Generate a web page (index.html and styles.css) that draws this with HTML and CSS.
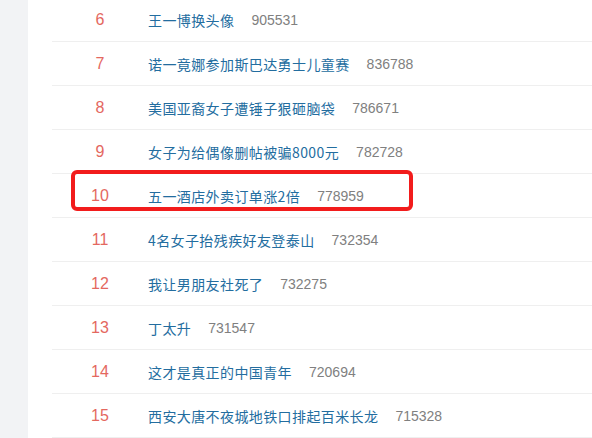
FILE: index.html
```html
<!DOCTYPE html>
<html lang="zh-CN">
<head>
<meta charset="utf-8">
<title>热搜榜</title>
<link rel="stylesheet" href="styles.css">
</head>
<body>
<div class="page">
  <aside class="side"></aside>
  <main class="main">
    <ul class="list">
      <li class="row"><span class="rank">6</span><a class="title">王一博换头像</a><span class="count">905531</span></li>
      <li class="row"><span class="rank">7</span><a class="title">诺一竟娜参加斯巴达勇士儿童赛</a><span class="count">836788</span></li>
      <li class="row"><span class="rank">8</span><a class="title">美国亚裔女子遭锤子狠砸脑袋</a><span class="count">786671</span></li>
      <li class="row"><span class="rank">9</span><a class="title">女子为给偶像删帖被骗8000元</a><span class="count">782728</span></li>
      <li class="row marked"><span class="rank">10</span><a class="title">五一酒店外卖订单涨2倍</a><span class="count">778959</span><span class="highlight"></span></li>
      <li class="row"><span class="rank">11</span><a class="title">4名女子抬残疾好友登泰山</a><span class="count">732354</span></li>
      <li class="row"><span class="rank">12</span><a class="title">我让男朋友社死了</a><span class="count">732275</span></li>
      <li class="row"><span class="rank">13</span><a class="title">丁太升</a><span class="count">731547</span></li>
      <li class="row"><span class="rank">14</span><a class="title">这才是真正的中国青年</a><span class="count">720694</span></li>
      <li class="row"><span class="rank">15</span><a class="title">西安大唐不夜城地铁口排起百米长龙</a><span class="count">715328</span></li>
    </ul>
  </main>
</div>
</body>
</html>
```

FILE: styles.css
```css
html, body {
  margin: 0;
  padding: 0;
  height: 100%;
  overflow: hidden;
  background: #ffffff;
}
.page {
  display: flex;
  height: 100%;
  font-family: "Liberation Sans", "Noto Sans CJK SC", sans-serif;
}
.side {
  width: 28px;
  flex: 0 0 28px;
  background: #f2f3f5;
}
.main {
  flex: 1;
  padding-left: 24px;
}
.list {
  list-style: none;
  margin: -2px 0 0 0;
  padding: 0;
}
.row {
  position: relative;
  display: flex;
  align-items: center;
  height: 43px;
  border-bottom: 1px solid #efefef;
}
.rank {
  width: 96px;
  flex: 0 0 96px;
  text-align: center;
  font-size: 16px;
  color: #e4685f;
}
.title {
  font-family: "Noto Sans CJK SC", sans-serif;
  font-size: 14px;
  letter-spacing: 0.4px;
  color: #236d9f;
  text-decoration: none;
}
.count {
  margin-left: 17px;
  font-size: 14px;
  color: #808080;
}
.highlight {
  position: absolute;
  left: 19px;
  top: -4px;
  width: 342px;
  height: 41px;
  box-sizing: border-box;
  border: 4px solid #f21c1c;
  border-radius: 6px;
}
```
